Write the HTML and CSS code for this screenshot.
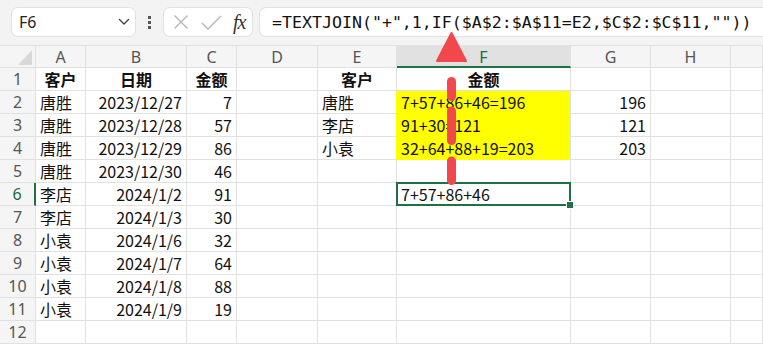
FILE: index.html
```html
<!DOCTYPE html>
<html lang="zh-CN">
<head>
  <meta charset="UTF-8" />
  <meta name="viewport" content="width=device-width, initial-scale=1.0" />
  <title>TEXTJOIN</title>
  <link rel="stylesheet" href="styles.css">
</head>
<body>

<div class="toolbar">
  <div class="namebox">
    <span>F6</span>
    <svg class="chev" width="12" height="8" viewBox="0 0 12 8"><path d="M1.5 1.5 L6 6 L10.5 1.5" fill="none" stroke="#444" stroke-width="1.4" stroke-linecap="round" stroke-linejoin="round"/></svg>
  </div>
  <div class="dots"><i></i><i></i><i></i></div>
  <div class="fxbox">
    <svg width="16" height="16" viewBox="0 0 16 16"><path d="M1.5 1.5 L14.5 14.5 M14.5 1.5 L1.5 14.5" stroke="#b4b4b4" stroke-width="1.3" fill="none"/></svg>
    <svg width="21" height="15" viewBox="0 0 21 15"><path d="M1 8 L7 14 L20 1" stroke="#b4b4b4" stroke-width="1.3" fill="none"/></svg>
    <span class="fx">fx</span>
  </div>
  <div class="formula">=TEXTJOIN("+",1,IF($A$2:$A$11=E2,$C$2:$C$11,""))</div>
</div>

<div class="sheet">
  <div class="hd corner"><svg width="14" height="15" viewBox="0 0 14 15"><path d="M14 0 L14 15 L0 15 Z" fill="#d8d8d8"/></svg></div>
  <div class="hd">A</div><div class="hd">B</div><div class="hd">C</div><div class="hd">D</div><div class="hd">E</div><div class="hd on">F</div><div class="hd">G</div><div class="hd">H</div><div class="hd"></div>

  <div class="rh">1</div>
  <div class="c b">客户</div><div class="c b">日期</div><div class="c b">金额</div><div class="c"></div>
  <div class="c b">客户</div><div class="c b">金额</div><div class="c"></div><div class="c"></div><div class="c"></div>

  <div class="rh">2</div>
  <div class="c">唐胜</div><div class="c r">2023/12/27</div><div class="c r">7</div><div class="c"></div>
  <div class="c">唐胜</div><div class="c y">7+57+86+46=196</div><div class="c r">196</div><div class="c"></div><div class="c"></div>

  <div class="rh">3</div>
  <div class="c">唐胜</div><div class="c r">2023/12/28</div><div class="c r">57</div><div class="c"></div>
  <div class="c">李店</div><div class="c y">91+30=121</div><div class="c r">121</div><div class="c"></div><div class="c"></div>

  <div class="rh">4</div>
  <div class="c">唐胜</div><div class="c r">2023/12/29</div><div class="c r">86</div><div class="c"></div>
  <div class="c">小袁</div><div class="c y">32+64+88+19=203</div><div class="c r">203</div><div class="c"></div><div class="c"></div>

  <div class="rh">5</div>
  <div class="c">唐胜</div><div class="c r">2023/12/30</div><div class="c r">46</div><div class="c"></div>
  <div class="c"></div><div class="c"></div><div class="c"></div><div class="c"></div><div class="c"></div>

  <div class="rh on">6</div>
  <div class="c">李店</div><div class="c r">2024/1/2</div><div class="c r">91</div><div class="c"></div>
  <div class="c"></div><div class="c sel">7+57+86+46</div><div class="c"></div><div class="c"></div><div class="c"></div>

  <div class="rh">7</div>
  <div class="c">李店</div><div class="c r">2024/1/3</div><div class="c r">30</div><div class="c"></div>
  <div class="c"></div><div class="c"></div><div class="c"></div><div class="c"></div><div class="c"></div>

  <div class="rh">8</div>
  <div class="c">小袁</div><div class="c r">2024/1/6</div><div class="c r">32</div><div class="c"></div>
  <div class="c"></div><div class="c"></div><div class="c"></div><div class="c"></div><div class="c"></div>

  <div class="rh">9</div>
  <div class="c">小袁</div><div class="c r">2024/1/7</div><div class="c r">64</div><div class="c"></div>
  <div class="c"></div><div class="c"></div><div class="c"></div><div class="c"></div><div class="c"></div>

  <div class="rh">10</div>
  <div class="c">小袁</div><div class="c r">2024/1/8</div><div class="c r">88</div><div class="c"></div>
  <div class="c"></div><div class="c"></div><div class="c"></div><div class="c"></div><div class="c"></div>

  <div class="rh">11</div>
  <div class="c">小袁</div><div class="c r">2024/1/9</div><div class="c r">19</div><div class="c"></div>
  <div class="c"></div><div class="c"></div><div class="c"></div><div class="c"></div><div class="c"></div>

  <div class="rh">12</div>
  <div class="c"></div><div class="c"></div><div class="c"></div><div class="c"></div>
  <div class="c"></div><div class="c"></div><div class="c"></div><div class="c"></div><div class="c"></div>
</div>

<!-- red annotation arrow over the sheet -->
<svg class="arrow" width="763" height="345" viewBox="0 0 763 345">
  <path d="M451.5 33 L466 61 L437 61 Z" fill="#f2474b" stroke="#f2474b" stroke-width="2" stroke-linejoin="round"/>
  <g stroke="#f2474b" stroke-width="9" stroke-linecap="round">
    <line x1="451.5" y1="81.5" x2="451.5" y2="96.5"/>
    <line x1="451.5" y1="111" x2="451.5" y2="140.5"/>
    <line x1="451.5" y1="161" x2="451.5" y2="180.5"/>
  </g>
</svg>

</body>
</html>
```

FILE: styles.css
```css
body {
  margin: 0;
  width: 763px;
  height: 345px;
  overflow: hidden;
  background: #fff;
  color: #111;
  font-family: 'Noto Sans CJK SC', 'Noto Sans', sans-serif;
  position: relative;
}
.toolbar {
  height: 46px;
  box-sizing: border-box;
  padding: 7px 0 0 11px;
  background: #f3f3f3;
  border-bottom: 1px solid #e2e2e2;
  display: flex;
  align-items: flex-start;
  white-space: nowrap;
  overflow: hidden;
}
.namebox, .fxbox, .formula {
  height: 30px;
  box-sizing: border-box;
  background: #fff;
  border: 1px solid #e1e1e1;
  border-radius: 7px;
  display: flex;
  align-items: center;
  flex-shrink: 0;
}
.namebox {
  width: 125px;
  padding: 0 5px 0 7px;
  justify-content: space-between;
  font-family: 'Noto Sans', sans-serif;
  font-size: 16px;
  color: #222;
}
.dots {
  width: 27px;
  height: 30px;
  flex-shrink: 0;
  display: flex;
  flex-direction: column;
  align-items: center;
  justify-content: center;
  gap: 2px;
}
.dots i {
  width: 3px;
  height: 3px;
  background: #555;
}
.fxbox {
  width: 90px;
  padding: 0 6px 0 9px;
  gap: 12px;
}
.fx {
  font-family: 'Liberation Serif', serif;
  font-style: italic;
  font-size: 20px;
  color: #333;
  margin-left: -1px;
  letter-spacing: -1px;
}
.formula {
  margin-left: 6px;
  flex: 1;
  min-width: 0;
  padding-left: 12px;
  border-right: none;
  border-radius: 7px 0 0 7px;
  overflow: hidden;
  font-family: 'DejaVu Sans Mono', monospace;
  font-size: 16.6px;
  color: #111;
}
.sheet {
  display: grid;
  grid-template-columns: 36px 50px 101px 50px 81px 79px 174px 80px 80px 32px;
  grid-template-rows: 22px;
  grid-auto-rows: 23px;
}
.sheet > div {
  box-sizing: border-box;
  border-right: 1px solid #e1e1e1;
  border-bottom: 1px solid #e1e1e1;
  font-size: 16px;
  line-height: 23px;
  white-space: nowrap;
}
.hd {
  background: #f5f5f5;
  color: #555;
  text-align: center;
  font-family: 'Noto Sans', sans-serif;
  line-height: 22px !important;
}
.hd.on {
  background: #e1e1e1;
  color: #1d6b3c;
  border-bottom: 2px solid #1f7145 !important;
}
.corner {
  display: flex;
  align-items: flex-end;
  justify-content: flex-end;
  padding: 0 3px 2px 0;
}
.corner svg {
  display: block;
}
.rh {
  background: #f5f5f5;
  color: #555;
  text-align: center;
  font-family: 'Noto Sans', sans-serif;
}
.rh.on {
  color: #1d6b3c;
  border-right: 2px solid #1f7145 !important;
}
.c {
  padding: 0 4px;
}
.r {
  text-align: right;
}
.b {
  text-align: center;
  font-weight: bold;
}
.y {
  background: #ffff00;
  border-bottom-color: #ffff00 !important;
  box-shadow: -1px 0 0 #ffff00;
}
.sel {
  position: relative;
}
.sel::after {
  content: "";
  position: absolute;
  left: -1px;
  top: -1px;
  right: -1px;
  bottom: -1px;
  border: 2px solid #1f7145;
}
.sel::before {
  content: "";
  position: absolute;
  right: -4px;
  bottom: -4px;
  width: 6px;
  height: 6px;
  background: #1f7145;
  border: 1px solid #fff;
  z-index: 1;
}
.arrow {
  position: absolute;
  left: 0;
  top: 0;
  pointer-events: none;
}
```
